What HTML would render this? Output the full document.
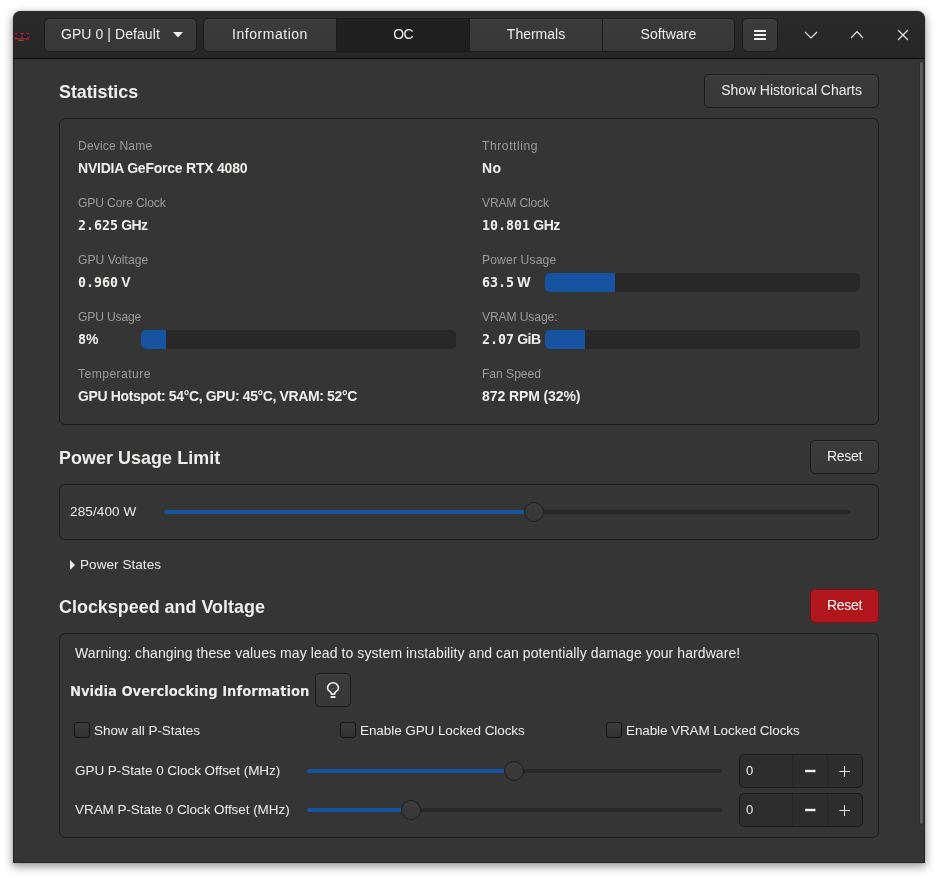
<!DOCTYPE html>
<html lang="en">
<head>
<meta charset="utf-8">
<title>LACT</title>
<style>
*{box-sizing:border-box;margin:0;padding:0}
html,body{width:938px;height:879px;background:#fff;overflow:hidden}
body{font-family:"Liberation Sans",sans-serif;font-size:14px;color:#eeeeec;position:relative}
.abs{position:absolute}
#win{position:absolute;left:13px;top:11px;width:912px;height:852px;background:#353535;border-radius:8px 8px 0 0;
 box-shadow:0 3px 9px 1px rgba(0,0,0,.38),0 0 0 1px rgba(0,0,0,.05);overflow:hidden}
#win:after{content:"";position:absolute;left:0;top:48px;right:0;bottom:0;border:1px solid #262626;border-top:0}
#hdr{position:absolute;left:0;top:0;width:912px;height:48px;background:linear-gradient(#2b2b2b,#262626);border-bottom:1px solid #070707}
.t{position:absolute;white-space:nowrap;line-height:20px;height:20px}
.btn{position:absolute;background:linear-gradient(#3b3b3b,#373737);border:1px solid #1b1b1b;border-radius:5px;box-shadow:inset 0 1px rgba(255,255,255,.03)}
.btn .t{left:0;right:0;text-align:center}
.card{position:absolute;border:1px solid #1c1c1c;border-radius:6px}
.h{font-weight:bold;font-size:17.9px;color:#eeeeec}
.lab{color:#9b9b9a;font-size:12.1px}
.val{font-weight:bold;font-size:14px;letter-spacing:-.22px}
.mono{font-family:"DejaVu Sans Mono","Liberation Mono",monospace;font-weight:bold;font-size:13.3px;letter-spacing:0}
.bar{position:absolute;height:19px;background:#282828;border-radius:5px;overflow:hidden}
.bar i{position:absolute;left:0;top:0;bottom:0;background:#1653a0}
.trough{position:absolute;height:4px;background:#282828;border-radius:2px}
.fill{position:absolute;height:4px;background:#1653a0;border-radius:2px}
.knob{position:absolute;width:20px;height:20px;border-radius:50%;background:linear-gradient(#3b3b3b,#363636);border:1px solid #1f1f1f}
.chk{position:absolute;width:16px;height:16px;border:1px solid #141414;border-radius:3px;background:linear-gradient(#3d3d3d,#303030)}
</style>
</head>
<body>
<div id="win">
 <div id="hdr"></div>
</div>
<div id="ui" style="position:absolute;left:0;top:0;width:938px;height:879px;will-change:transform">
 <!-- header -->
 <svg class="abs" style="left:14px;top:32px" width="17" height="10" viewBox="0 0 17 10">
  <rect x="0.900" y="1" width="14.300" height="6.500" fill="#96212b"/>
  <rect x="0.900" y="1" width="14.300" height="1.100" fill="#b5242e"/>
  <rect x="0.900" y="5.700" width="14.300" height="1.400" fill="#a52631"/>
  <rect x="1.100" y="2.400" width="0.900" height="2.400" fill="#2a1216"/>
  <rect x="14.100" y="2.400" width="0.900" height="2.400" fill="#2a1216"/>
  <rect x="2.400" y="2.100" width="11.200" height="3.200" fill="#3b3a45"/>
  <circle cx="4.900" cy="3.800" r="2.500" fill="#1c1727"/>
  <circle cx="11.100" cy="3.800" r="2.500" fill="#1c1727"/>
  <circle cx="5.100" cy="3.700" r="1" fill="#30324a"/>
  <circle cx="11.300" cy="3.700" r="1" fill="#30324a"/>
  <rect x="4" y="8.100" width="5.700" height="0.800" fill="#7a691f"/>
 </svg>
 <div class="btn" style="left:44px;top:18px;width:153px;height:34px">
  <div class="t" style="left:16px;right:auto;top:5px;font-size:14px;text-align:left;letter-spacing:0.07px">GPU 0 | Default</div>
  <svg class="abs" style="left:128px;top:13px" width="10" height="6" viewBox="0 0 10 6"><path d="M0 0h10L5 5.6z" fill="#eeeeec"/></svg>
 </div>
 <div class="btn" style="left:203px;top:18px;width:532px;height:34px;overflow:hidden">
  <div class="abs" style="left:132px;top:0;width:134px;height:32px;background:#1f1f1f;border-left:1px solid #1c1c1c;border-right:1px solid #1c1c1c"></div>
  <div class="abs" style="left:398px;top:0;width:1px;height:32px;background:#1c1c1c"></div>
  <div class="t" style="left:0;right:auto;width:132px;top:5px;font-size:14px;letter-spacing:0.53px">Information</div>
  <div class="t" style="left:133px;right:auto;width:132px;top:5px;font-size:14px;letter-spacing:-0.86px">OC</div>
  <div class="t" style="left:266px;right:auto;width:132px;top:5px;font-size:14px;letter-spacing:-0.01px">Thermals</div>
  <div class="t" style="left:399px;right:auto;width:131px;top:5px;font-size:14px;letter-spacing:0.07px">Software</div>
 </div>
 <div class="btn" style="left:742px;top:18px;width:36px;height:34px">
  <svg class="abs" style="left:11px;top:11px" width="12" height="11" viewBox="0 0 12 11"><path d="M0 0h12v2H0zM0 4h12v2H0zM0 8h12v2H0z" fill="#f4f4f3"/></svg>
 </div>
 <svg class="abs" style="left:804px;top:30px" width="14" height="10" viewBox="0 0 14 10"><path d="M1 2l6 6 6-6" fill="none" stroke="#eeeeec" stroke-width="1.15"/></svg>
 <svg class="abs" style="left:850px;top:30px" width="14" height="10" viewBox="0 0 14 10"><path d="M1 8l6-6.300 6 6.300" fill="none" stroke="#eeeeec" stroke-width="1.15"/></svg>
 <svg class="abs" style="left:897px;top:29px" width="12" height="12" viewBox="0 0 12 12"><path d="M1 1l10 10M11 1L1 11" fill="none" stroke="#eeeeec" stroke-width="1.15"/></svg>

 <!-- scrollbar -->
 <div class="abs" style="left:920px;top:62px;width:3px;height:762px;background:#5c5c5a;border-radius:1.5px;box-shadow:0 0 0 1px rgba(0,0,0,.12)"></div>

 <!-- Statistics -->
 <div class="t h" style="left:59px;top:82px;letter-spacing:-0.05px">Statistics</div>
 <div class="btn" style="left:704px;top:74px;width:175px;height:34px"><div class="t" style="top:5px;font-size:14px;letter-spacing:-0.04px">Show Historical Charts</div></div>
 <div class="card" style="left:59px;top:118px;width:820px;height:307px"></div>

 <div class="t lab" style="left:78px;top:136px;letter-spacing:0.16px">Device Name</div>
 <div class="t val" style="left:78px;top:158px;letter-spacing:-0.23px">NVIDIA GeForce RTX 4080</div>
 <div class="t lab" style="left:78px;top:193px;letter-spacing:-0.13px">GPU Core Clock</div>
 <div class="t val" style="left:78px;top:215px;letter-spacing:-.6px"><span class="mono">2.625</span> GHz</div>
 <div class="t lab" style="left:78px;top:250px;letter-spacing:0.03px">GPU Voltage</div>
 <div class="t val" style="left:78px;top:272px;letter-spacing:-.6px"><span class="mono">0.960</span> V</div>
 <div class="t lab" style="left:78px;top:307px;letter-spacing:-0.15px">GPU Usage</div>
 <div class="t val" style="left:78px;top:329px;letter-spacing:-.6px"><span class="mono">8</span>%</div>
 <div class="bar" style="left:141px;top:330px;width:315px"><i style="width:25px"></i></div>
 <div class="t lab" style="left:78px;top:364px;letter-spacing:0.46px">Temperature</div>
 <div class="t val" style="left:78px;top:386px;letter-spacing:-0.37px">GPU Hotspot: 54°C, GPU: 45°C, VRAM: 52°C</div>

 <div class="t lab" style="left:482px;top:136px;letter-spacing:0.57px">Throttling</div>
 <div class="t val" style="left:482px;top:158px;letter-spacing:0.47px">No</div>
 <div class="t lab" style="left:482px;top:193px;letter-spacing:-0.17px">VRAM Clock</div>
 <div class="t val" style="left:482px;top:215px;letter-spacing:-.6px"><span class="mono">10.801</span> GHz</div>
 <div class="t lab" style="left:482px;top:250px;letter-spacing:0.16px">Power Usage</div>
 <div class="t val" style="left:482px;top:272px;letter-spacing:-.6px"><span class="mono">63.5</span> W</div>
 <div class="bar" style="left:545px;top:273px;width:315px"><i style="width:70px"></i></div>
 <div class="t lab" style="left:482px;top:307px;letter-spacing:-0.11px">VRAM Usage:</div>
 <div class="t val" style="left:482px;top:329px;letter-spacing:-.6px"><span class="mono">2.07</span> GiB</div>
 <div class="bar" style="left:545px;top:330px;width:315px"><i style="width:40px"></i></div>
 <div class="t lab" style="left:482px;top:364px;letter-spacing:-0.02px">Fan Speed</div>
 <div class="t val" style="left:482px;top:386px;letter-spacing:-0.09px">872 RPM (32%)</div>

 <!-- Power Usage Limit -->
 <div class="t h" style="left:59px;top:448px;letter-spacing:0.07px">Power Usage Limit</div>
 <div class="btn" style="left:810px;top:440px;width:69px;height:34px"><div class="t" style="top:5px;font-size:14px;letter-spacing:-0.32px">Reset</div></div>
 <div class="card" style="left:59px;top:484px;width:820px;height:56px"></div>
 <div class="t" style="left:70px;top:502px;font-size:13.5px;letter-spacing:0.13px">285/400 W</div>
 <div class="trough" style="left:164px;top:510px;width:687px"></div>
 <div class="fill" style="left:164px;top:510px;width:370px"></div>
 <div class="knob" style="left:524px;top:502px"></div>

 <svg class="abs" style="left:70px;top:559.5px" width="6" height="10" viewBox="0 0 6 10"><path d="M0 0l5 5-5 5z" fill="#eeeeec"/></svg>
 <div class="t" style="left:80px;top:555px;font-size:13.5px;letter-spacing:0.06px">Power States</div>

 <!-- Clockspeed and Voltage -->
 <div class="t h" style="left:59px;top:597px;letter-spacing:0.02px">Clockspeed and Voltage</div>
 <div class="btn" style="left:810px;top:589px;width:69px;height:34px;background:#b2161d;border-color:#7d0f14"><div class="t" style="top:5px;font-size:14px;color:#fff;letter-spacing:-0.32px">Reset</div></div>
 <div class="card" style="left:59px;top:633px;width:820px;height:205px"></div>
 <div class="t" style="left:75px;top:643px;font-size:14px;letter-spacing:0.08px">Warning: changing these values may lead to system instability and can potentially damage your hardware!</div>
 <div class="t" style="left:70px;top:682px;font-size:13.2px;font-weight:bold;font-family:'DejaVu Sans',sans-serif;letter-spacing:-0.03px">Nvidia Overclocking Information</div>
 <div class="btn" style="left:315px;top:673px;width:36px;height:34px">
  <svg class="abs" style="left:9px;top:6px" width="16" height="20" viewBox="0 0 16 20"><path d="M6.300 14.100v-0.900C6.300 11.600 2.550 10.800 2.550 8.200a5.450 5.450 0 0 1 10.900 0c0 2.600-3.750 3.400-3.750 5v0.900z" fill="none" stroke="#eeeeec" stroke-width="1.650" stroke-linejoin="round"/><path d="M5.600 16.100h4.800v1.900H5.600z" fill="#eeeeec"/><path d="M6.900 8.300h2.200L8 9.900z" fill="#777775"/></svg>
 </div>

 <div class="chk" style="left:74px;top:722px"></div>
 <div class="t" style="left:94px;top:721px;font-size:13.5px;letter-spacing:-0.04px">Show all P-States</div>
 <div class="chk" style="left:340px;top:722px"></div>
 <div class="t" style="left:360px;top:721px;font-size:13.5px;letter-spacing:-0.08px">Enable GPU Locked Clocks</div>
 <div class="chk" style="left:606px;top:722px"></div>
 <div class="t" style="left:626px;top:721px;font-size:13.5px;letter-spacing:-0.11px">Enable VRAM Locked Clocks</div>

 <div class="t" style="left:75px;top:761px;font-size:13.5px;letter-spacing:-0.05px">GPU P-State 0 Clock Offset (MHz)</div>
 <div class="trough" style="left:307px;top:769px;width:415px"></div>
 <div class="fill" style="left:307px;top:769px;width:207px"></div>
 <div class="knob" style="left:504px;top:761px"></div>
 <div class="btn" style="left:739px;top:754px;width:124px;height:34px;background:#2d2d2d">
  <div class="t" style="left:6px;right:auto;top:5.5px;font-size:13px;text-align:left">0</div>
  <div class="abs" style="left:52px;top:0;width:1px;height:32px;background:#262626"></div>
  <div class="abs" style="left:87px;top:0;width:1px;height:32px;background:#262626"></div>
  <svg class="abs" style="left:63px;top:9px" width="14" height="14" viewBox="0 0 14 14"><path d="M2 7h10.500" stroke="#eeeeec" stroke-width="2.400"/></svg>
  <svg class="abs" style="left:98px;top:9px" width="14" height="14" viewBox="0 0 14 14"><path d="M1 7.500h11M6.500 2v11" stroke="#eeeeec" stroke-width="1"/></svg>
 </div>

 <div class="t" style="left:75px;top:800px;font-size:13.5px;letter-spacing:-0.06px">VRAM P-State 0 Clock Offset (MHz)</div>
 <div class="trough" style="left:307px;top:808px;width:415px"></div>
 <div class="fill" style="left:307px;top:808px;width:104px"></div>
 <div class="knob" style="left:401px;top:800px"></div>
 <div class="btn" style="left:739px;top:793px;width:124px;height:34px;background:#2d2d2d">
  <div class="t" style="left:6px;right:auto;top:5.5px;font-size:13px;text-align:left">0</div>
  <div class="abs" style="left:52px;top:0;width:1px;height:32px;background:#262626"></div>
  <div class="abs" style="left:87px;top:0;width:1px;height:32px;background:#262626"></div>
  <svg class="abs" style="left:63px;top:9px" width="14" height="14" viewBox="0 0 14 14"><path d="M2 7h10.500" stroke="#eeeeec" stroke-width="2.400"/></svg>
  <svg class="abs" style="left:98px;top:9px" width="14" height="14" viewBox="0 0 14 14"><path d="M1 7.500h11M6.500 2v11" stroke="#eeeeec" stroke-width="1"/></svg>
 </div>
</div>
</body>
</html>
